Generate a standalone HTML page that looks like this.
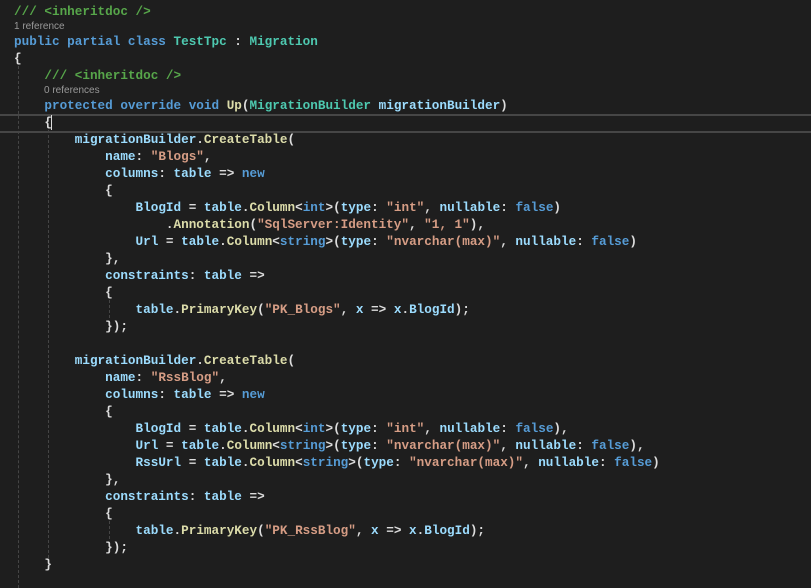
<!DOCTYPE html>
<html><head><meta charset="utf-8"><style>
body{margin:0;width:811px;height:588px;background:#1e1e1e;overflow:hidden;position:relative}
.c{position:absolute;left:14px;top:3px;font-family:"Liberation Mono",monospace;font-weight:bold;font-size:12.67px;color:#dcdcdc}
.l{height:17px;line-height:17px;white-space:pre}
.r{height:13px;line-height:13px;font-family:"Liberation Sans",sans-serif;font-weight:normal;font-size:10px;color:#999;white-space:pre}
.k{color:#569cd6}.t{color:#4ec9b0}.m{color:#dcdcaa}.v{color:#9cdcfe}.s{color:#d69d85}.g{color:#57a64a}
.gd{position:absolute;width:0;border-left:1px dashed #454545}
.hl{position:absolute;left:0;right:0;top:114px;height:15px;border-top:2px solid #464646;border-bottom:2px solid #464646}
.cur{position:absolute;left:51px;top:115px;width:1px;height:15px;background:#dcdcdc}
</style></head><body>
<div class="hl"></div><div class="cur"></div>
<div class="gd" style="left:18px;top:66px;height:522px"></div>
<div class="gd" style="left:48px;top:130px;height:428px"></div>
<div class="gd" style="left:109px;top:300px;height:18px"></div>
<div class="gd" style="left:109px;top:521px;height:18px"></div>
<div class="c"><div class="l"><span class="g">/// &lt;inheritdoc /&gt;</span></div><div class="r">1 reference</div><div class="l"><span class="k">public partial class</span> <span class="t">TestTpc</span> : <span class="t">Migration</span></div><div class="l">{</div><div class="l">    <span class="g">/// &lt;inheritdoc /&gt;</span></div><div class="r" style="padding-left:30px">0 references</div><div class="l">    <span class="k">protected override void</span> <span class="m">Up</span>(<span class="t">MigrationBuilder</span> <span class="v">migrationBuilder</span>)</div><div class="l">    {</div><div class="l">        <span class="v">migrationBuilder</span>.<span class="m">CreateTable</span>(</div><div class="l">            <span class="v">name</span>: <span class="s">"Blogs"</span>,</div><div class="l">            <span class="v">columns</span>: <span class="v">table</span> =&gt; <span class="k">new</span></div><div class="l">            {</div><div class="l">                <span class="v">BlogId</span> = <span class="v">table</span>.<span class="m">Column</span>&lt;<span class="k">int</span>&gt;(<span class="v">type</span>: <span class="s">"int"</span>, <span class="v">nullable</span>: <span class="k">false</span>)</div><div class="l">                    .<span class="m">Annotation</span>(<span class="s">"SqlServer:Identity"</span>, <span class="s">"1, 1"</span>),</div><div class="l">                <span class="v">Url</span> = <span class="v">table</span>.<span class="m">Column</span>&lt;<span class="k">string</span>&gt;(<span class="v">type</span>: <span class="s">"nvarchar(max)"</span>, <span class="v">nullable</span>: <span class="k">false</span>)</div><div class="l">            },</div><div class="l">            <span class="v">constraints</span>: <span class="v">table</span> =&gt;</div><div class="l">            {</div><div class="l">                <span class="v">table</span>.<span class="m">PrimaryKey</span>(<span class="s">"PK_Blogs"</span>, <span class="v">x</span> =&gt; <span class="v">x</span>.<span class="v">BlogId</span>);</div><div class="l">            });</div><div class="l"> </div><div class="l">        <span class="v">migrationBuilder</span>.<span class="m">CreateTable</span>(</div><div class="l">            <span class="v">name</span>: <span class="s">"RssBlog"</span>,</div><div class="l">            <span class="v">columns</span>: <span class="v">table</span> =&gt; <span class="k">new</span></div><div class="l">            {</div><div class="l">                <span class="v">BlogId</span> = <span class="v">table</span>.<span class="m">Column</span>&lt;<span class="k">int</span>&gt;(<span class="v">type</span>: <span class="s">"int"</span>, <span class="v">nullable</span>: <span class="k">false</span>),</div><div class="l">                <span class="v">Url</span> = <span class="v">table</span>.<span class="m">Column</span>&lt;<span class="k">string</span>&gt;(<span class="v">type</span>: <span class="s">"nvarchar(max)"</span>, <span class="v">nullable</span>: <span class="k">false</span>),</div><div class="l">                <span class="v">RssUrl</span> = <span class="v">table</span>.<span class="m">Column</span>&lt;<span class="k">string</span>&gt;(<span class="v">type</span>: <span class="s">"nvarchar(max)"</span>, <span class="v">nullable</span>: <span class="k">false</span>)</div><div class="l">            },</div><div class="l">            <span class="v">constraints</span>: <span class="v">table</span> =&gt;</div><div class="l">            {</div><div class="l">                <span class="v">table</span>.<span class="m">PrimaryKey</span>(<span class="s">"PK_RssBlog"</span>, <span class="v">x</span> =&gt; <span class="v">x</span>.<span class="v">BlogId</span>);</div><div class="l">            });</div><div class="l">    }</div></div>
</body></html>
